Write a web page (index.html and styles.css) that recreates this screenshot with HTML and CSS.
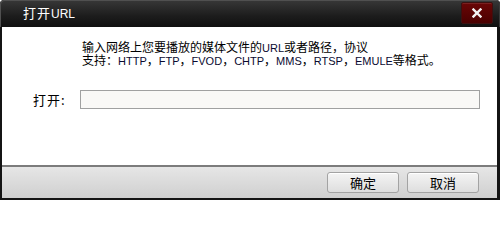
FILE: index.html
```html
<!DOCTYPE html>
<html lang="zh-CN">
<head>
<meta charset="utf-8">
<title>打开URL</title>
<link rel="stylesheet" href="styles.css">
</head>
<body>
<div class="window">
  <div class="titlebar">
    <span class="title">打开<span class="lat-t">URL</span></span>
    <button class="close" aria-label="关闭">
      <svg width="10" height="10" viewBox="0 0 10 10"><path d="M1.5 1.5 L8.5 8.5 M8.5 1.5 L1.5 8.5" stroke="#f2f2f2" stroke-width="2.4" stroke-linecap="square"/></svg>
    </button>
  </div>
  <div class="content">
    <div class="main">
      <p class="desc"><span class="line">输入网络上您要播放的媒体文件的<span class="lat">URL</span>或者路径，协议</span><span class="line">支持：<span class="lat">HTTP</span>，<span class="lat">FTP</span>，<span class="lat">FVOD</span>，<span class="lat">CHTP</span>，<span class="lat">MMS</span>，<span class="lat">RTSP</span>，<span class="lat">EMULE</span>等格式。</span></p>
      <div class="row">
        <label class="label" for="url">打开:</label>
        <input id="url" class="input" type="text">
      </div>
    </div>
    <div class="footer">
      <button class="btn">确定</button>
      <button class="btn">取消</button>
    </div>
  </div>
</div>
</body>
</html>
```

FILE: styles.css
```css
html, body {
  margin: 0;
  padding: 0;
  background: #ffffff;
}
body {
  width: 500px;
  height: 200px;
  overflow: hidden;
  font-family: "Noto Sans CJK SC", "Liberation Sans", sans-serif;
}
.window {
  width: 500px;
  height: 200px;
  box-sizing: border-box;
  background: #141414;
  border-radius: 4px 4px 0 0;
  display: flex;
  flex-direction: column;
  overflow: hidden;
}
.titlebar {
  height: 27px;
  flex: none;
  box-sizing: border-box;
  background: linear-gradient(#383838, #1c1c1c 60%, #101010);
  border-radius: 4px 4px 0 0;
  box-shadow: inset 1px 1px 0 #505050, inset -1px 0 0 #3a3a3a;
  display: flex;
  align-items: center;
  justify-content: space-between;
  padding: 0 7px 0 23px;
}
.title {
  color: #ffffff;
  font-size: 13px;
  letter-spacing: 1px;
  line-height: 14px;
}
.lat-t {
  font-family: "Liberation Sans", sans-serif;
  font-size: 12px;
  letter-spacing: 0;
}
.close {
  width: 32px;
  height: 22px;
  margin-top: -2px;
  padding: 0;
  box-sizing: border-box;
  border: 1px solid #3c1010;
  border-radius: 2px;
  background: linear-gradient(#6a0606, #4a0000);
  box-shadow: inset 0 1px 0 #7a2020;
  display: flex;
  align-items: center;
  justify-content: center;
}
.close svg {
  display: block;
}
.content {
  flex: 1;
  margin: 0 3px 2px 2px;
  background: #ffffff;
  display: flex;
  flex-direction: column;
}
.main {
  flex: 1;
}
.desc {
  margin: 0;
  padding: 13px 0 0 80px;
  display: flex;
  flex-direction: column;
  font-size: 12px;
  line-height: 12px;
  color: #000000;
}
.line {
  display: block;
  height: 13px;
  line-height: 13px;
  white-space: nowrap;
}
.lat {
  font-family: "Liberation Sans", sans-serif;
  font-size: 11px;
  line-height: 11px;
  color: #0a0a30;
}
.row {
  display: flex;
  align-items: center;
  margin-top: 24px;
  padding-left: 31px;
}
.label {
  width: 47px;
  font-size: 13px;
  letter-spacing: 1px;
  line-height: 16px;
  color: #000000;
}
.input {
  width: 400px;
  height: 19px;
  box-sizing: border-box;
  margin: 0;
  padding: 0 3px;
  border: 1px solid #a0a0a0;
  background: #f9f8f6;
  outline: none;
}
.footer {
  height: 33px;
  flex: none;
  box-sizing: border-box;
  border-top: 2px solid #7c7c7c;
  background: linear-gradient(#e6e6e6, #cfcfcf);
  display: flex;
  justify-content: flex-end;
  align-items: flex-start;
  gap: 8px;
  padding: 5px 18px 0 0;
}
.btn {
  width: 72px;
  height: 21px;
  box-sizing: border-box;
  padding: 0;
  margin: 0;
  border: 1px solid #a3a3a3;
  border-radius: 3px;
  background: linear-gradient(#f4f4f4, #dedede);
  box-shadow: inset 0 1px 0 #ffffff;
  font-family: "Noto Sans CJK SC", sans-serif;
  font-size: 13px;
  line-height: 17px;
  color: #000000;
}
```
